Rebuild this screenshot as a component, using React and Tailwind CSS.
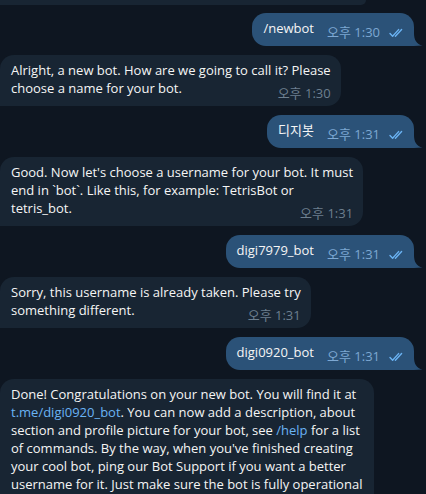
import React from 'react'

const font = { fontFamily: '"Open Sans", "Noto Sans CJK KR", sans-serif' }

function Checks() {
  return (
    <svg width="16" height="10" viewBox="0 0 16 10" fill="none" className="ml-[9px]">
      <path d="M1 5.5 L3.6 8.2 L9.6 1.6" stroke="#6ab2f2" strokeWidth="1.4" strokeLinecap="round" strokeLinejoin="round" />
      <path d="M6.4 8.2 L12.6 1.6" stroke="#6ab2f2" strokeWidth="1.4" strokeLinecap="round" strokeLinejoin="round" />
    </svg>
  )
}

function Outgoing({ text, time }) {
  return (
    <div className="flex justify-end pr-[12px]">
      <div className="relative flex items-end bg-[#2b5278] rounded-[14px] rounded-br-none pl-[11px] pr-[9px] pt-[6px] pb-[9px]">
        <span className="leading-[18px] text-[13px] text-[#f5f5f5] whitespace-nowrap">{text}</span>
        <span className="flex items-center ml-[13px] -mb-[2px]">
          <span className="text-[13px] leading-[13px] text-[#7da8d3] whitespace-nowrap">{time}</span>
          <Checks />
        </span>
        <svg width="9" height="13" viewBox="0 0 9 13" className="absolute -right-[9px] bottom-0">
          <path d="M0 0 C0 7 2.5 11 8.5 12.6 L0 13 Z" fill="#2b5278" />
        </svg>
      </div>
    </div>
  )
}

function Incoming({ lines, time }) {
  const last = lines[lines.length - 1]
  return (
    <div className="flex justify-start">
      <div className="bg-[#182533] rounded-[14px] rounded-bl-none pl-[11px] pr-[10px] pt-[6px] pb-[6px] text-[13px] text-[#f5f5f5]">
        {lines.slice(0, -1).map((l, i) => (
          <div key={i} className="leading-[18px] whitespace-nowrap">{l}</div>
        ))}
        <div className="flex items-end justify-between">
          <span className="leading-[18px] whitespace-nowrap mb-[3px]">{last}</span>
          <span className="ml-[12px] text-[13px] leading-[13px] text-[#6d7f8f] whitespace-nowrap">{time}</span>
        </div>
      </div>
    </div>
  )
}

const Link = ({ children }) => <span className="text-[#6ab3f3]">{children}</span>

export default function App() {
  return (
    <div className="w-[426px] h-[494px] overflow-hidden bg-[#0e1621]" style={font}>
      <div className="h-[5px] w-[366px] bg-[#182533] rounded-br-[12px]" />
      <div className="flex flex-col gap-[9px] pt-[8px]">
        <Outgoing text="/newbot" time="오후 1:30" />
        <Incoming
          lines={['Alright, a new bot. How are we going to call it? Please', 'choose a name for your bot.']}
          time="오후 1:30"
        />
        <Outgoing text="디지봇" time="오후 1:31" />
        <Incoming
          lines={[
            "Good. Now let's choose a username for your bot. It must",
            'end in `bot`. Like this, for example: TetrisBot or',
            'tetris_bot.',
          ]}
          time="오후 1:31"
        />
        <Outgoing text="digi7979_bot" time="오후 1:31" />
        <Incoming
          lines={['Sorry, this username is already taken. Please try', 'something different.']}
          time="오후 1:31"
        />
        <Outgoing text="digi0920_bot" time="오후 1:31" />
        <div className="flex justify-start">
          <div className="bg-[#182533] rounded-[14px] rounded-bl-none pl-[11px] pr-[12px] pt-[6px] pb-[7px] text-[13px] leading-[18px] text-[#f5f5f5] whitespace-nowrap">
            <div>Done! Congratulations on your new bot. You will find it at</div>
            <div><Link>t.me/digi0920_bot</Link>. You can now add a description, about</div>
            <div>section and profile picture for your bot, see <Link>/help</Link> for a list</div>
            <div>of commands. By the way, when you've finished creating</div>
            <div>your cool bot, ping our Bot Support if you want a better</div>
            <div>username for it. Just make sure the bot is fully operational</div>
            <div>before you do this.</div>
          </div>
        </div>
      </div>
    </div>
  )
}
